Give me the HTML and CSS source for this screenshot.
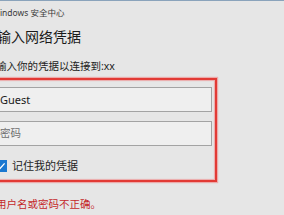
FILE: index.html
```html
<!DOCTYPE html>
<html lang="zh-CN">
<head>
<meta charset="utf-8">
<link rel="stylesheet" href="styles.css">
</head>
<body>
<div class="dialog">
  <div class="title">Windows 安全中心</div>
  <div class="heading">输入网络凭据</div>
  <div class="subtitle">输入你的凭据以连接到:xx</div>
  <div class="fields">
    <div class="field">Guest</div>
    <div class="field placeholder">密码</div>
  </div>
  <label class="remember">
    <span class="checkbox">
      <svg viewBox="0 0 12 12" width="12" height="12"><path d="M2.5 6.2 L5 8.6 L9.6 3.4" fill="none" stroke="#fff" stroke-width="1.3"/></svg>
    </span>
    <span class="remember-text">记住我的凭据</span>
  </label>
  <div class="error">用户名或密码不正确。</div>
</div>
<div class="highlight"></div>
</body>
</html>
```
FILE: styles.css
```css
html, body {
  margin: 0;
  padding: 0;
  background: #e6e6e6;
  overflow: hidden;
}
body {
  width: 284px;
  height: 215px;
  border-top: 1px solid #8aa3bb;
  box-sizing: border-box;
  font-family: "Noto Sans", "Noto Sans CJK SC", sans-serif;
  color: #1f1f1f;
}
.dialog {
  margin-left: -4px;
}
.title {
  margin-top: 5px;
  margin-left: -4px;
  font-size: 8.5px;
  line-height: 14px;
  color: #3a3a3a;
  white-space: nowrap;
}
.heading {
  margin-top: 7px;
  margin-left: 1px;
  font-size: 14px;
  line-height: 20px;
  color: #1a1a1a;
  white-space: nowrap;
}
.subtitle {
  margin-top: 12px;
  font-size: 10.5px;
  line-height: 14px;
  color: #222;
  white-space: nowrap;
}
.fields {
  margin-top: 14px;
  display: flex;
  flex-direction: column;
  gap: 9px;
  margin-left: -6px;
  width: 222px;
}
.field {
  height: 25px;
  box-sizing: border-box;
  border: 1px solid #a3a3a3;
  background: #efefef;
  padding-left: 9px;
  font-size: 11px;
  line-height: 23px;
  color: #1a1a1a;
}
.field.placeholder {
  font-size: 10.5px;
  color: #6e6e6e;
}
.remember {
  margin-top: 13px;
  display: flex;
  align-items: center;
  gap: 5px;
  margin-left: -1px;
  height: 14px;
}
.checkbox {
  width: 12px;
  height: 12px;
  background: #1a78d0;
  display: flex;
}
.remember-text {
  font-size: 11px;
  line-height: 14px;
  color: #1f1f1f;
}
.error {
  margin-top: 24px;
  font-size: 10.5px;
  line-height: 14px;
  color: #c4282a;
  white-space: nowrap;
}
.highlight {
  position: absolute;
  left: -10px;
  top: 78px;
  width: 227px;
  height: 104px;
  box-sizing: border-box;
  border: 2px solid #e23a35;
  box-shadow: 0 0 1px 1px rgba(240, 120, 120, 0.55), inset 0 0 1px 1px rgba(240, 120, 120, 0.55);
}
```
